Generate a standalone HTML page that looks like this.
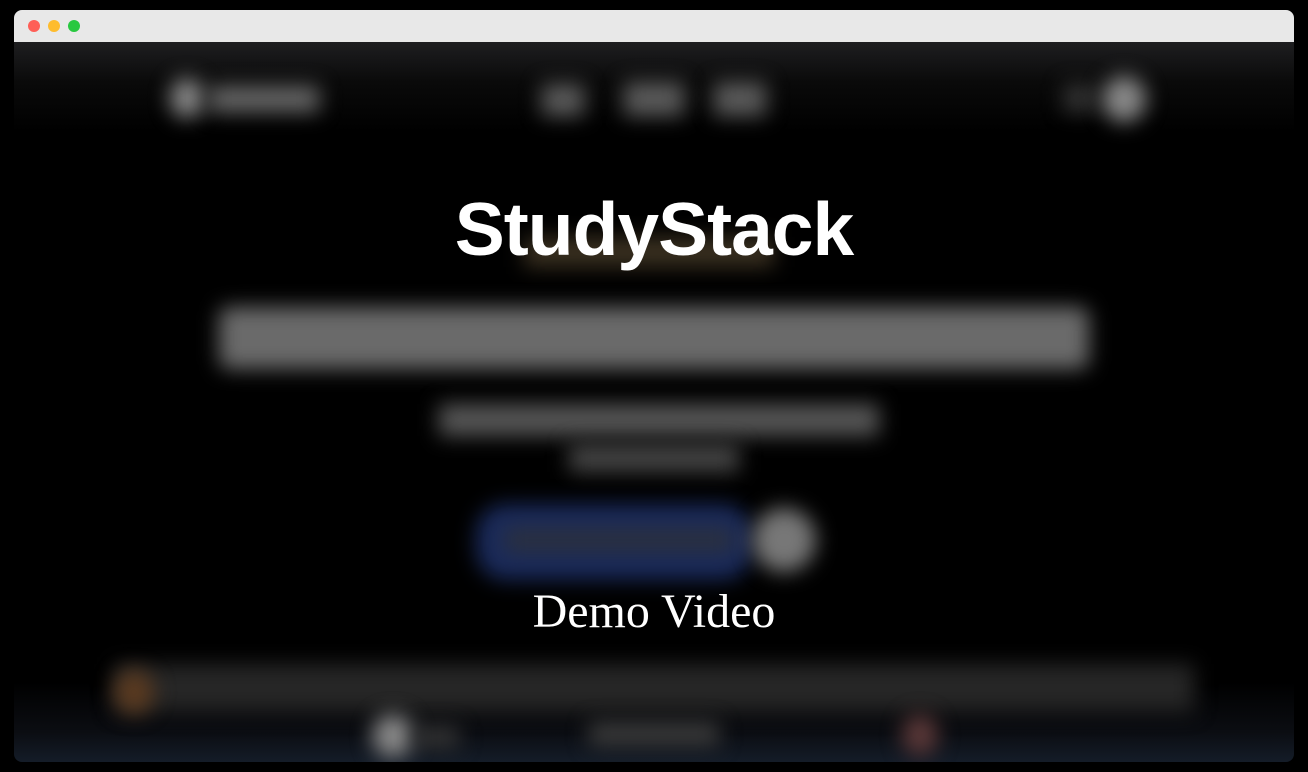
<!DOCTYPE html>
<html><head><style>
html,body{margin:0;padding:0;background:#000;width:1308px;height:772px;overflow:hidden;font-family:"Liberation Sans",sans-serif}
.win{position:absolute;left:14px;top:10px;width:1280px;height:752px;border-radius:8px;overflow:hidden;background:#000}
.bar{position:absolute;left:0;top:0;width:1280px;height:32px;background:#e8e8e8}
.dot{position:absolute;top:10px;width:12px;height:12px;border-radius:50%}
.content{position:absolute;left:0;top:32px;width:1280px;height:720px;background:linear-gradient(#1e1e20 0px,#0a0a0a 40px,#000 90px,#000 640px,#0b0d12 690px,#141c28 720px)}
.b{position:absolute;filter:blur(10px)}
.t1{position:absolute;left:0;width:1280px;text-align:center;color:#fff}
</style></head><body>
<div class="win">
<div class="bar">
<div class="dot" style="left:14px;background:#fe5f57"></div>
<div class="dot" style="left:34px;background:#febc2e"></div>
<div class="dot" style="left:54px;background:#28c840"></div>
</div>
<div class="content">
<div class="b" style="left:156px;top:36px;width:34px;height:40px;border-radius:50%;background:#888"></div>
<div class="b" style="left:195px;top:44px;width:110px;height:26px;background:#666"></div>
<div class="b" style="left:528px;top:42px;width:42px;height:32px;background:#5a5a5a"></div>
<div class="b" style="left:610px;top:40px;width:60px;height:34px;background:#5a5a5a"></div>
<div class="b" style="left:700px;top:40px;width:52px;height:34px;background:#5a5a5a"></div>
<div class="b" style="left:1050px;top:42px;width:30px;height:28px;background:#333"></div>
<div class="b" style="left:1088px;top:34px;width:44px;height:46px;border-radius:50%;background:#888"></div>
<div class="b" style="left:510px;top:195px;width:250px;height:30px;background:#3a3020"></div>
<div class="b" style="left:205px;top:265px;width:870px;height:62px;background:#6a6a6a;border-radius:10px"></div>
<div class="b" style="left:425px;top:362px;width:440px;height:32px;background:#555"></div>
<div class="b" style="left:555px;top:402px;width:170px;height:28px;background:#444"></div>
<div class="b" style="left:462px;top:462px;width:276px;height:76px;background:#1a2a5a;border-radius:30px"></div>
<div class="b" style="left:490px;top:485px;width:230px;height:26px;background:#2a3040"></div>
<div class="b" style="left:738px;top:466px;width:64px;height:64px;border-radius:50%;background:#777"></div>
<div class="b" style="left:100px;top:622px;width:1080px;height:48px;background:#262626"></div>
<div class="b" style="left:100px;top:628px;width:40px;height:44px;border-radius:50%;background:#5a3a20"></div>
<div class="b" style="left:358px;top:672px;width:42px;height:44px;border-radius:50%;background:#888"></div>
<div class="b" style="left:400px;top:684px;width:45px;height:22px;background:#333"></div>
<div class="b" style="left:575px;top:680px;width:130px;height:24px;background:#3a3a3a"></div>
<div class="b" style="left:888px;top:672px;width:36px;height:42px;border-radius:50%;background:#5a3838"></div>
</div>
<div class="t1" style="top:174px;font-size:75px;font-weight:bold;letter-spacing:-1px;line-height:90px">StudyStack</div>
<div class="t1" style="top:574px;font-family:'Liberation Serif',serif;font-size:48px;line-height:56px;letter-spacing:0px">Demo Video</div>
</div>
</body></html>
